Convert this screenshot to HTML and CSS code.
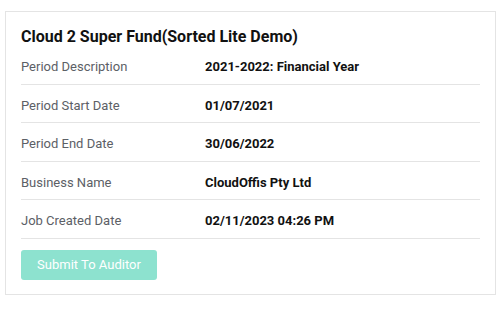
FILE: index.html
```html
<!DOCTYPE html>
<html lang="en">
<head>
    <meta charset="UTF-8">
    <title>Job Details</title>
    <link rel="stylesheet" href="styles.css">
</head>
<body>
    <div class="card">
        <h2 class="card-title">Cloud 2 Super Fund(Sorted Lite Demo)</h2>

        <!-- Job details -->
        <div class="details">
            <div class="row"><span class="label">Period Description</span><span class="value">2021-2022: Financial Year</span></div>
            <div class="row"><span class="label">Period Start Date</span><span class="value">01/07/2021</span></div>
            <div class="row"><span class="label">Period End Date</span><span class="value">30/06/2022</span></div>
            <div class="row"><span class="label">Business Name</span><span class="value">CloudOffis Pty Ltd</span></div>
            <div class="row"><span class="label">Job Created Date</span><span class="value">02/11/2023 04:26 PM</span></div>
        </div>

        <button class="btn" disabled>Submit To Auditor</button>
    </div>
</body>
</html>
```

FILE: styles.css
```css
* { box-sizing: border-box; margin: 0; padding: 0; }
body {
    font-family: Roboto, "Liberation Sans", sans-serif;
    background-color: #fff;
    color: #111;
    padding: 11px 7px 0 5px;
}

.card { width: 491px; border: 1px solid #e4e4e4; padding: 15px 15px 14px 15px; background-color: #fff; }
.card-title { font-size: 16px; font-weight: 700; line-height: 19px; color: #111; }
.row { display: grid; grid-template-columns: 184px 1fr; font-size: 13px; line-height: 19.5px; padding: 11px 0 7px; border-bottom: 1px solid #e4e4e4; }
.label { color: #5c6066; }
.value { font-weight: 700; color: #111; }
.btn { display: inline-block; margin-top: 11px; width: 136px; height: 30px; font-family: inherit; font-size: 13px; font-weight: 400; background-color: #8de2cf; color: #fff; border: none; border-radius: 3px; }
```
